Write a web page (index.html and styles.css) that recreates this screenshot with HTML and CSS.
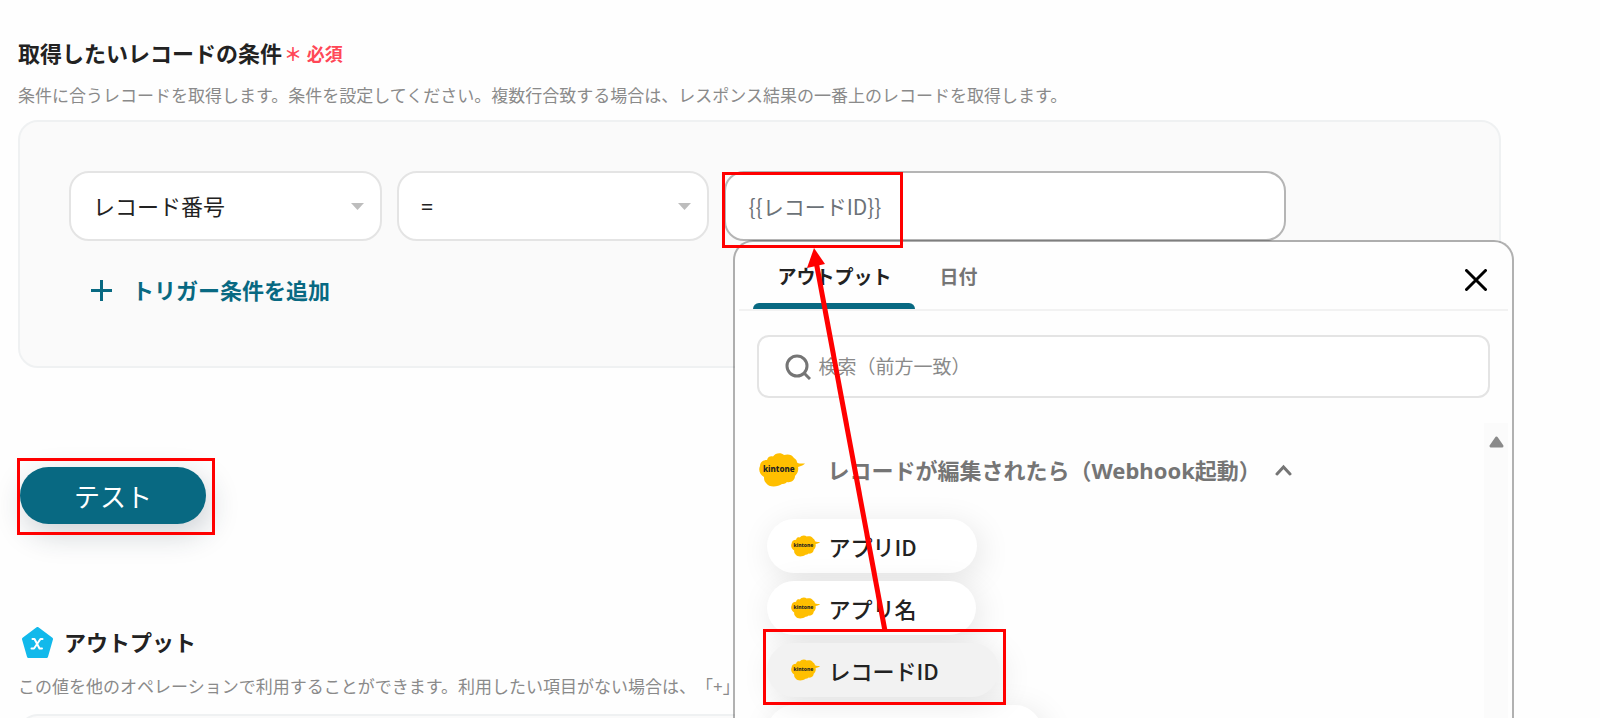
FILE: index.html
```html
<!DOCTYPE html>
<html lang="ja">
<head>
  <meta charset="UTF-8">
  <meta name="viewport" content="width=device-width, initial-scale=1.0">
  <title>取得したいレコードの条件</title>
  <link rel="stylesheet" href="styles.css">
</head>
<body>

<!-- shared kintone logo -->
<svg class="defs" width="0" height="0" aria-hidden="true">
  <symbol id="kintone" viewBox="0 0 46 34">
    <path fill="#ffbf00" d="M8 7 C9 3 12 3 14 3.500 C16 0 22 -1 25 2 C28 1 33 1 35 5 C37 6 38 8 38 9.500 C40 11 43 10.500 46 10.500 C45 12 42 13 39 14 C40 18 38 21 36 23 C36 27 32 30 28 29 C26 31 24 31 23 31 C19 34 10 35 7 30 C5 28 5 26 5 24 C1 22 -1 17 1 13 C1 9 4 7 8 7 Z"/>
    <text class="logo-text" x="4" y="19">kintone</text>
  </symbol>
</svg>

<main class="page">
  <div class="heading">
    <h2>取得したいレコードの条件</h2>
    <span class="required">＊ 必須</span>
  </div>
  <p class="description">条件に合うレコードを取得します。条件を設定してください。複数行合致する場合は、レスポンス結果の一番上のレコードを取得します。</p>

  <section class="conditions">
    <div class="condition-row">
      <div class="select-box">
        <select aria-label="項目">
          <option>レコード番号</option>
        </select>
        <svg class="caret" width="13" height="7" viewBox="0 0 13 7"><path d="M0 0h13L6.500 7z" fill="#bdbdbd"/></svg>
      </div>
      <div class="select-box">
        <select aria-label="演算子">
          <option>=</option>
        </select>
        <svg class="caret" width="13" height="7" viewBox="0 0 13 7"><path d="M0 0h13L6.500 7z" fill="#bdbdbd"/></svg>
      </div>
      <div class="value-box">
        <input class="value" type="text" value="{{レコードID}}" aria-label="値">

        <div class="popup">
          <div class="tabs">
            <button class="tab active">アウトプット</button>
            <button class="tab">日付</button>
            <button class="close" aria-label="閉じる">
              <svg width="22" height="22" viewBox="0 0 22 22"><path d="M1.500 1.500l19 19M20.500 1.500l-19 19" stroke="#000" stroke-width="3" stroke-linecap="round"/></svg>
            </button>
          </div>
          <label class="search">
            <svg width="26" height="26" viewBox="0 0 26 26" fill="none" stroke="#757575" stroke-width="3"><circle cx="12" cy="12" r="10"/><path d="M19 19l6 6"/></svg>
            <input type="text" placeholder="検索（前方一致）" aria-label="検索（前方一致）">
          </label>
          <div class="results">
            <div class="list">
              <button class="group">
                <svg class="logo" width="46" height="34"><use href="#kintone"/></svg>
                <span>レコードが編集されたら（Webhook起動）</span>
                <svg width="17" height="12" viewBox="0 0 17 12"><path d="M2 10l6.500-7 6.500 7" fill="none" stroke="#757575" stroke-width="3" stroke-linecap="round"/></svg>
              </button>
              <div class="pills">
                <button class="pill"><svg width="29" height="22"><use href="#kintone"/></svg>アプリID</button>
                <button class="pill"><svg width="29" height="22"><use href="#kintone"/></svg>アプリ名</button>
                <div class="marked">
                  <button class="pill selected"><svg width="29" height="22"><use href="#kintone"/></svg>レコードID</button>
                  <div class="mark mark-pill"></div>
                </div>
                <button class="pill"><svg width="29" height="22"><use href="#kintone"/></svg>レコード作成者</button>
              </div>
            </div>
            <div class="scrollbar">
              <svg width="15" height="12" viewBox="0 0 15 12"><path d="M7.500 2L2 10h11z" fill="#8a8a8a" stroke="#8a8a8a" stroke-width="3" stroke-linejoin="round"/></svg>
            </div>
          </div>
        </div>

        <div class="mark mark-value"></div>
        <svg class="arrow" width="90" height="386" viewBox="0 0 90 386">
          <path d="M15.500 16L84 383" stroke="#f00" stroke-width="5"/>
          <path d="M13 0L6 20L24 16z" fill="#f00"/>
        </svg>
      </div>
    </div>
    <button class="add">
      <svg width="21" height="21" viewBox="0 0 21 21"><path d="M10.500 0v21M0 10.500h21" stroke="#086982" stroke-width="3"/></svg>
      トリガー条件を追加
    </button>
  </section>

  <div class="test">
    <button class="test-button">テスト</button>
    <div class="mark mark-test"></div>
  </div>

  <div class="heading output-heading">
    <svg width="31" height="31" viewBox="0 0 31 31">
      <path d="M15.500 1.500L29.500 12L24.500 29.500H6.500L1.500 12z" fill="#12b9eb" stroke="#12b9eb" stroke-width="3" stroke-linejoin="round"/>
      <path d="M10.500 12h2l5 9.500h2.500M20.500 12h-2l-6.500 9.500h-2.500" fill="none" stroke="#fff" stroke-width="2" stroke-linecap="round" stroke-linejoin="round"/>
    </svg>
    <h2>アウトプット</h2>
  </div>
  <p class="description">この値を他のオペレーションで利用することができます。利用したい項目がない場合は、「+」から追加してください。</p>
  <section class="output-box"></section>
</main>

</body>
</html>
```

FILE: styles.css
```css
* {
  box-sizing: border-box;
}
body {
  margin: 0;
  background: #fefefe;
  color: #222;
  font-family: "Noto Sans", "Noto Sans CJK JP", sans-serif;
  text-spacing-trim: space-all;
}
button, input, select {
  font-family: inherit;
  color: inherit;
}
button {
  border: none;
  background: none;
  padding: 0;
  cursor: pointer;
}
svg {
  flex: none;
}
.defs {
  display: none;
}
.logo-text {
  font: 800 8px "Noto Sans", sans-serif;
  fill: #222;
}
.page {
  height: 100vh;
  overflow: hidden;
  padding: 36px 99px 0 18px;
}

/* headings */
.heading {
  display: flex;
  align-items: center;
  height: 34px;
}
h2 {
  margin: 0;
  font-size: 22px;
  line-height: 34px;
}
.required {
  margin-left: 2px;
  color: #ff4757;
  font-size: 18px;
  font-weight: bold;
}
.description {
  margin: 14px 0 12px;
  color: #8a8a8a;
  font-size: 17px;
  line-height: 24px;
  white-space: nowrap;
}

/* condition panel */
.conditions {
  padding: 49px 213px 59px 49px;
  border: 2px solid #eff1f2;
  border-radius: 20px;
  background: #fafafa;
}
.condition-row {
  display: flex;
  gap: 15px;
}
.select-box {
  position: relative;
  flex: 313 1 0;
}
.select-box select,
.value {
  display: block;
  width: 100%;
  height: 70px;
  padding: 0 22px;
  border: 2px solid #e4e4e4;
  border-radius: 20px;
  background: #fff;
  font-size: 22px;
  appearance: none;
}
.caret {
  position: absolute;
  top: 32px;
  right: 18px;
  pointer-events: none;
}
.value-box {
  position: relative;
  flex: 562 1 0;
}
.value-box .value {
  border-color: #b5b5b5;
  color: #6c7278;
  font-family: "Noto Sans CJK JP", sans-serif;
  font-size: 21px;
}
.add {
  display: flex;
  align-items: center;
  gap: 20px;
  margin: 32px 0 0 22px;
  color: #086982;
  font-size: 22px;
  font-weight: bold;
  line-height: 34px;
}

/* popup */
.popup {
  position: absolute;
  top: 69px;
  left: 9px;
  right: -228px;
  padding: 0 4px;
  border: 2px solid rgba(0, 0, 0, 0.3);
  border-radius: 20px;
  background: #fefefe;
  background-clip: padding-box;
}
.tabs {
  display: flex;
  height: 69px;
  padding-left: 14px;
  border-bottom: 2px solid #f2f2f2;
}
.tab {
  padding: 0 24px;
  color: #757575;
  font-size: 19px;
  font-weight: bold;
}
.tab.active {
  position: relative;
  color: #222;
}
.tab.active::after {
  content: "";
  position: absolute;
  left: 0;
  right: 0;
  bottom: 0;
  height: 6px;
  border-radius: 6px 6px 0 0;
  background: #086982;
}
.close {
  display: flex;
  align-items: center;
  margin: 8px 21px 0 auto;
}
.search {
  display: flex;
  align-items: center;
  gap: 7px;
  height: 63px;
  margin: 24px 18px 0;
  padding: 0 26px;
  border: 2px solid #e4e4e4;
  border-radius: 12px;
  background: #fff;
}
.search input {
  flex: 1;
  padding: 0;
  border: none;
  outline: none;
  background: none;
  font-size: 19px;
}
.search input::placeholder {
  color: #8a8a8a;
}
.results {
  display: flex;
  margin-top: 25px;
}
.list {
  flex: 1;
  padding: 30px 0 0 20px;
}
.group {
  display: flex;
  align-items: center;
  height: 34px;
  color: #757575;
  font-size: 22px;
  font-weight: bold;
  line-height: 30px;
}
.group .logo {
  margin-right: 22px;
}
.group span {
  margin-right: 14px;
}
.pills {
  display: flex;
  flex-direction: column;
  align-items: flex-start;
  gap: 8px;
  padding: 32px 8px;
}
.pill {
  display: flex;
  align-items: center;
  gap: 8px;
  height: 54px;
  padding: 0 60px 0 24px;
  border-radius: 27px;
  background: #fff;
  box-shadow: 4px 6px 32px rgba(0, 0, 0, 0.1);
  font-family: "Noto Sans CJK JP", sans-serif;
  font-size: 22px;
  font-weight: 500;
}
.pill.selected {
  background: #f2f2f2;
}
.marked {
  position: relative;
}
.scrollbar {
  width: 24px;
  padding-top: 8px;
  background: #fbfbfb;
  text-align: center;
}

/* red marks */
.mark {
  position: absolute;
  border: 3px solid #f00;
  pointer-events: none;
}
.mark-value {
  top: 1px;
  left: -2px;
  width: 181px;
  height: 76px;
}
.mark-test {
  inset: -9px -9px -11px -3px;
}
.mark-pill {
  inset: -14px -7px -8px -4px;
}
.arrow {
  position: absolute;
  top: 77px;
  left: 77px;
  overflow: visible;
  pointer-events: none;
}

/* test button */
.test {
  position: relative;
  width: fit-content;
  margin: 99px 0 0 2px;
}
.test-button {
  width: 186px;
  height: 57px;
  border-radius: 29px;
  background: #086982;
  box-shadow: 4px 10px 30px rgba(30, 50, 70, 0.22);
  color: #fff;
  font-size: 26px;
}

/* output */
.output-heading {
  gap: 11px;
  margin: 101px 0 16px 4px;
}
.output-box {
  height: 120px;
  margin-top: 15px;
  border: 2px solid #eff1f2;
  border-radius: 20px;
  background: #fafafa;
}
```
